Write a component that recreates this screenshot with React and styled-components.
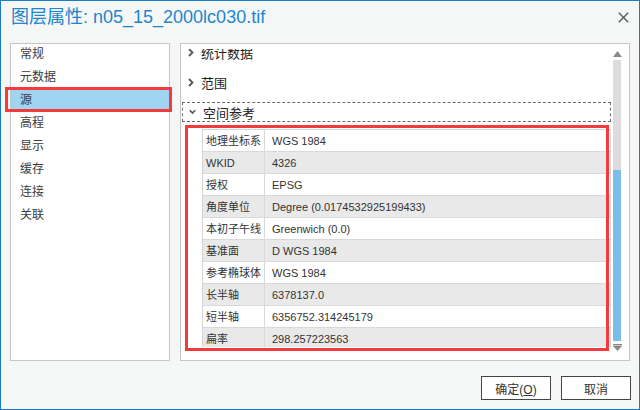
import React, { useLayoutEffect, useRef } from "react";
import styled, { createGlobalStyle } from "styled-components";

const GlobalStyle = createGlobalStyle`
  html, body { margin: 0; padding: 0; background: #ffffff; }
  * { box-sizing: border-box; }
`;

const FONT = `"Liberation Sans", "Noto Sans CJK SC", sans-serif`;

const Window = styled.div`
  position: relative;
  width: 640px;
  height: 410px;
  border: 1px solid #1a7cc4;
  background: #f5f7f7;
  display: flex;
  flex-direction: column;
  font-family: ${FONT};
  color: #333;
  overflow: hidden;
`;

const TitleBar = styled.div`
  height: 42px;
  display: flex;
  align-items: flex-start;
  justify-content: space-between;
  padding: 3px 10px 0 10px;
`;

const Title = styled.div`
  font-size: 18px;
  line-height: 26px;
  color: #1d86cc;
  white-space: nowrap;
`;

const CloseButton = styled.div`
  width: 12px;
  height: 26px;
  display: flex;
  align-items: center;
  justify-content: center;
`;

const Body = styled.div`
  height: 318px;
  display: flex;
  gap: 10px;
  padding: 0 9px;
`;

const ListPanel = styled.div`
  width: 160px;
  background: #ffffff;
  border: 1px solid #c6c6c6;
  display: flex;
  flex-direction: column;
  overflow: hidden;
`;

const ListItem = styled.div`
  height: 23px;
  flex: none;
  line-height: 25px;
  padding-left: 9px;
  font-size: 12px;
  color: #3c3c3c;
  background: ${(p) => (p.$selected ? "#9fd4f3" : "transparent")};
  margin-top: ${(p) => (p.$first ? "-2px" : "0")};
`;

const DetailPanel = styled.div`
  width: 450px;
  background: #ffffff;
  border: 1px solid #c6c6c6;
  display: flex;
  align-items: flex-start;
`;

const Viewport = styled.div`
  width: 432px;
  height: 298px;
  margin-top: 5px;
  overflow: hidden;
`;

const Content = styled.div`
  padding-bottom: 20px;
`;

const SectionHeader = styled.div`
  height: 20px;
  display: flex;
  align-items: center;
  gap: 7px;
  padding-left: ${(p) => (p.$focused ? "6px" : "7px")};
  margin: ${(p) => (p.$focused ? "0 2px 7px 1px" : "0 2px 10px 0")};
  border: ${(p) => (p.$focused ? "1px dashed #6a6a6a" : "none")};
  font-size: 13px;
  color: #222;
  white-space: nowrap;
`;

const Chevron = styled.svg`
  flex: none;
  display: block;
`;

const PropTable = styled.div`
  margin: 0 2px 0 21px;
  border-top: 1px solid #d4d4d4;
  border-left: 1px solid #d4d4d4;
  border-right: 1px solid #d4d4d4;
`;

const PropRow = styled.div`
  display: grid;
  grid-template-columns: 62px 1fr;
  height: 22px;
  border-bottom: 1px solid #d9d9d9;
  background: ${(p) => (p.$alt ? "#e9e9e9" : "#ffffff")};
  color: #333;
`;

const LabelCell = styled.div`
  border-right: 1px solid #d9d9d9;
  padding-left: 3px;
  font-size: 11px;
  line-height: 22px;
  white-space: nowrap;
  overflow: hidden;
`;

const ValueCell = styled.div`
  padding-left: 7px;
  font-size: 11px;
  line-height: 22px;
  white-space: nowrap;
`;

const ScrollBar = styled.div`
  width: 8px;
  margin-top: 7px;
  display: flex;
  flex-direction: column;
  align-items: center;
`;

const Track = styled.div`
  width: 8px;
  height: 281px;
  margin: 3px 0;
  background: #dcdcdc;
  display: flex;
  flex-direction: column;
  justify-content: flex-end;
`;

const Thumb = styled.div`
  width: 8px;
  background: #7bbde9;
`;

const Footer = styled.div`
  flex: 1;
  display: flex;
  justify-content: flex-end;
  gap: 10px;
  padding: 15px 8px 0 0;
`;

const Button = styled.button`
  width: 70px;
  height: 24px;
  background: #ffffff;
  border: 1px solid #454545;
  font-family: ${FONT};
  font-size: 12px;
  color: #333;
  padding: 0;
  cursor: pointer;
`;

const Annotation = styled.div`
  position: absolute;
  left: ${(p) => p.$x}px;
  top: ${(p) => p.$y}px;
  width: ${(p) => p.$w}px;
  height: ${(p) => p.$h}px;
  border: 3px solid #f43a3a;
  pointer-events: none;
`;

const navItems = ["常规", "元数据", "源", "高程", "显示", "缓存", "连接", "关联"];

const props = [
  ["地理坐标系", "WGS 1984"],
  ["WKID", "4326"],
  ["授权", "EPSG"],
  ["角度单位", "Degree (0.0174532925199433)"],
  ["本初子午线", "Greenwich (0.0)"],
  ["基准面", "D WGS 1984"],
  ["参考椭球体", "WGS 1984"],
  ["长半轴", "6378137.0"],
  ["短半轴", "6356752.314245179"],
  ["扁率", "298.257223563"],
];

const RightChevron = () => (
  <Chevron width="6" height="9" viewBox="0 0 6 9">
    <path d="M1 1 L4.5 4.5 L1 8" fill="none" stroke="#555" strokeWidth="1.8" />
  </Chevron>
);

const DownChevron = () => (
  <Chevron width="7" height="6" viewBox="0 0 7 6">
    <path d="M0.8 1.2 L3.5 4 L6.2 1.2" fill="none" stroke="#555" strokeWidth="1.6" />
  </Chevron>
);

export default function App() {
  const viewRef = useRef(null);
  useLayoutEffect(() => {
    if (viewRef.current) viewRef.current.scrollTop = 7;
  }, []);

  return (
    <>
      <GlobalStyle />
      <Window>
        <TitleBar>
          <Title>图层属性: n05_15_2000lc030.tif</Title>
          <CloseButton>
            <svg width="11" height="11" viewBox="0 0 11 11">
              <path d="M0.8 0.8 L10.2 10.2 M10.2 0.8 L0.8 10.2" stroke="#5a5a5a" strokeWidth="1.4" />
            </svg>
          </CloseButton>
        </TitleBar>
        <Body>
          <ListPanel>
            {navItems.map((t, i) => (
              <ListItem key={t} $first={i === 0} $selected={t === "源"}>
                {t}
              </ListItem>
            ))}
          </ListPanel>
          <DetailPanel>
            <Viewport ref={viewRef}>
              <Content>
                <SectionHeader>
                  <RightChevron />
                  统计数据
                </SectionHeader>
                <SectionHeader>
                  <RightChevron />
                  范围
                </SectionHeader>
                <SectionHeader $focused>
                  <DownChevron />
                  空间参考
                </SectionHeader>
                <PropTable>
                  {props.map(([k, v], i) => (
                    <PropRow key={k} $alt={i % 2 === 1}>
                      <LabelCell>{k}</LabelCell>
                      <ValueCell>{v}</ValueCell>
                    </PropRow>
                  ))}
                </PropTable>
              </Content>
            </Viewport>
            <ScrollBar>
              <svg width="9" height="6" viewBox="0 0 9 6">
                <path d="M4.5 0 L9 6 L0 6 Z" fill="#8a8a8a" />
              </svg>
              <Track>
                <Thumb style={{ height: "171px" }} />
              </Track>
              <svg width="9" height="7" viewBox="0 0 9 7">
                <rect x="0" y="0" width="9" height="1.5" fill="#8a8a8a" />
                <path d="M0 2 L9 2 L4.5 7 Z" fill="#8a8a8a" />
              </svg>
            </ScrollBar>
          </DetailPanel>
        </Body>
        <Footer>
          <Button>
            确定(<u>O</u>)
          </Button>
          <Button>取消</Button>
        </Footer>
        <Annotation $x={4} $y={86} $w={167} $h={25} />
        <Annotation $x={184} $y={124} $w={424} $h={226} />
      </Window>
    </>
  );
}
